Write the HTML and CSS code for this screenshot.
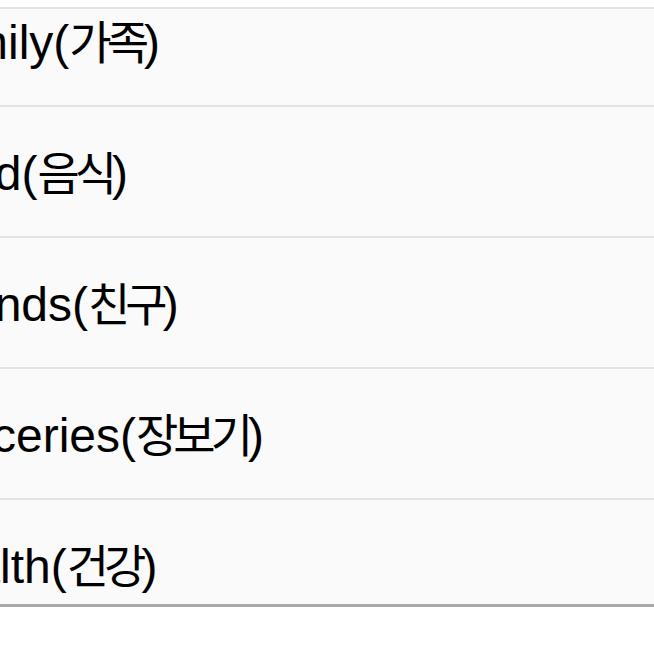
FILE: index.html
```html
<!DOCTYPE html>
<html lang="ko">
<head>
    <meta charset="UTF-8">
    <meta name="viewport" content="width=device-width, initial-scale=1.0">
    <title>Categories</title>
    <link rel="stylesheet" href="styles.css">
</head>
<body>

<div class="list-frame">
    <ul class="category-list">
        <li class="category-row"><span class="label">Family(<span class="ko">가족</span>)</span></li>
        <li class="category-row"><span class="label">Food(<span class="ko">음식</span>)</span></li>
        <li class="category-row"><span class="label">Friends(<span class="ko">친구</span>)</span></li>
        <li class="category-row"><span class="label">Groceries(<span class="ko">장보기</span>)</span></li>
        <li class="category-row"><span class="label">Health(<span class="ko">건강</span>)</span></li>
    </ul>
</div>

</body>
</html>
```

FILE: styles.css
```css
body {
    margin: 0;
    padding: 0;
    background-color: #fff;
    font-family: "Liberation Sans", "Noto Sans CJK KR", sans-serif;
    color: #000;
}
.list-frame {
    margin-top: 7px;
    height: 595px;
    overflow: hidden;
    background-color: #fafafa;
    border-top: 2px solid #e3e3e3;
    border-bottom: 3px solid #a9a9a9;
}
.category-list {
    list-style: none;
    margin: -33px 0 0 0;
    padding: 0;
}
.category-row {
    height: 131px;
    box-sizing: border-box;
    padding-top: 4px;
    display: flex;
    align-items: center;
    border-bottom: 2px solid #e3e3e3;
}
.label {
    margin-left: -88px;
    font-size: 48px;
    line-height: 55px;
    white-space: nowrap;
}
.ko {
    font-family: "Noto Sans CJK KR", sans-serif;
    font-size: 46px;
    line-height: 1;
    letter-spacing: -5px;
}
```
